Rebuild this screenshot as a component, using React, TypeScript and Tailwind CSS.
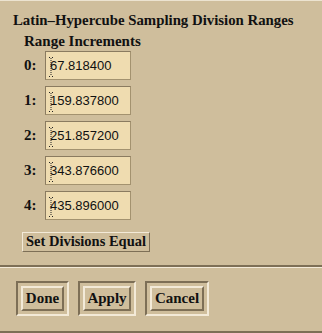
import React from 'react';

const values = ['67.818400', '159.837800', '251.857200', '343.876600', '435.896000'];

const Caret = () => (
  <svg width="5" height="20" viewBox="0 0 5 20" className="absolute left-[3px] top-[5px]">
    <path d="M0 0.5h1M3 0.5h1M2 1v18" stroke="#222" strokeWidth="1" strokeDasharray="1 1" fill="none" />
    <path d="M0 19.5h1M3 19.5h1" stroke="#222" strokeWidth="1" fill="none" />
  </svg>
);

const Field: React.FC<{ value: string }> = ({ value }) => (
  <div className="relative w-[86px] h-[29px] bg-[#efdcb0] border border-t-[#8a7b60] border-l-[#8a7b60] border-b-[#a3926f] border-r-[#a3926f] flex items-center pl-[4px]">
    <Caret />
    <span className="text-[13px] text-[#111] leading-none" style={{ fontFamily: '"Liberation Sans", Arial, sans-serif' }}>
      {value}
    </span>
  </div>
);

const MotifButton: React.FC<{ label: string; className?: string }> = ({ label, className }) => (
  <div
    className={
      'flex items-center justify-center bg-[#cfbe9c] border-t-[#f3ead8] border-l-[#f3ead8] border-b-[#7d6f56] border-r-[#7d6f56] font-bold text-[#111] whitespace-nowrap ' +
      (className ?? '')
    }
  >
    {label}
  </div>
);

const App: React.FC = () => {
  return (
    <div
      className="w-[322px] h-[333px] bg-[#cfbe9c] border-t border-t-[#ece3d0] border-b-2 border-b-[#7d6f56] flex flex-col text-[#111]"
      style={{ fontFamily: '"Liberation Serif", "Times New Roman", serif' }}
    >
      <div className="pl-[13px] pt-[11px] font-bold text-[14.8px] leading-[17px] whitespace-nowrap">
        Latin–Hypercube Sampling Division Ranges
      </div>
      <div className="pl-[24px] pt-[4px] font-bold text-[15px] leading-[17px]">Range Increments</div>

      <div className="flex flex-col gap-[6px] pt-[1px] pl-[24px]">
        {values.map((v, i) => (
          <div key={i} className="flex items-center">
            <span className="w-[21px] font-bold text-[15px]">{i}:</span>
            <Field value={v} />
          </div>
        ))}
      </div>

      <div className="pl-[22px] pt-[12px]">
        <MotifButton label="Set Divisions Equal" className="w-[128px] h-[20px] border text-[14.5px]" />
      </div>

      <div className="mt-[13px] border-t-2 border-t-[#7d6f56] border-b border-b-[#f3ead8] h-0" />

      <div className="flex gap-[9px] pl-[16px] pt-[13px]">
        {[
          ['Done', 'w-[53px]'],
          ['Apply', 'w-[58px]'],
          ['Cancel', 'w-[64px]'],
        ].map(([label, w]) => (
          <div
            key={label}
            className={`${w} h-[35px] p-[3px] border-2 border-t-[#7d6f56] border-l-[#7d6f56] border-b-[#f3ead8] border-r-[#f3ead8]`}
          >
            <MotifButton label={label} className="w-full h-full border-2 text-[15px]" />
          </div>
        ))}
      </div>
    </div>
  );
};

export default App;
